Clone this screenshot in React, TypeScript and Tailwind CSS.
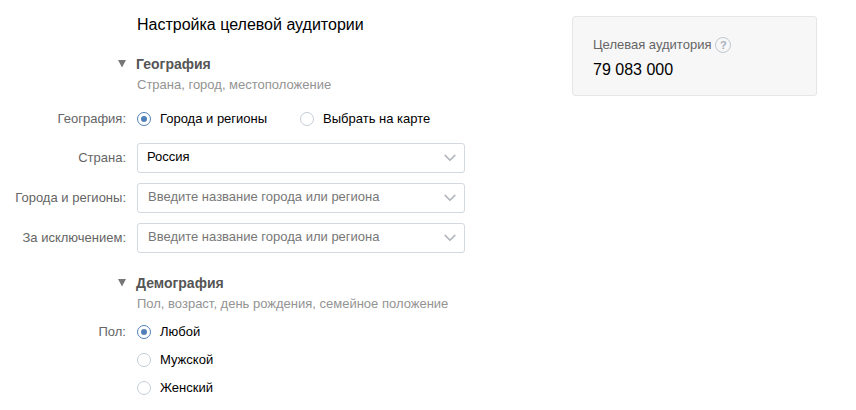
import { useState } from 'react';
import type { ReactNode } from 'react';

type SectionProps = {
  title: string;
  hint: string;
  children: ReactNode;
};

type RowProps = {
  label: string;
  htmlFor: string;
  children: ReactNode;
};

type RadioProps = {
  name: string;
  label: string;
  checked: boolean;
  onSelect: () => void;
};

const GENDERS = ['Любой', 'Мужской', 'Женский'];

function Chevron() {
  return (
    <svg
      className="pointer-events-none absolute top-[11px] right-[9px] h-2 w-3"
      viewBox="0 0 12 8"
      fill="none"
      stroke="#b1b5ba"
      strokeWidth="1.6"
      strokeLinecap="round"
      strokeLinejoin="round"
      aria-hidden="true"
    >
      <path d="M1.2 1.4 6 6.2l4.800-4.800" />
    </svg>
  );
}

function Section({ title, hint, children }: SectionProps) {
  const [open, setOpen] = useState(true);

  return (
    <section>
      <h2>
        <button
          type="button"
          className="flex items-center gap-[10px] pl-[118px] text-[14px] leading-5 font-bold text-[#555]"
          aria-expanded={open}
          onClick={() => setOpen(!open)}
        >
          <svg className="h-2 w-2" viewBox="0 0 8 8" fill="#777" aria-hidden="true">
            <path d="M0 0h8L4 7.5z" />
          </svg>
          {title}
        </button>
      </h2>
      <p className="mt-px pl-[137px] text-[13px] leading-5 text-[#939393]">{hint}</p>
      {open && children}
    </section>
  );
}

function Row({ label, htmlFor, children }: RowProps) {
  return (
    <div className="flex items-center gap-[11px]">
      <label htmlFor={htmlFor} className="w-[126px] shrink-0 text-right text-[#656565]">
        {label}
      </label>
      <div className="relative max-w-[328px] flex-1">{children}</div>
    </div>
  );
}

function Radio({ name, label, checked, onSelect }: RadioProps) {
  return (
    <label className="flex cursor-pointer items-center gap-[9px] leading-5">
      <input
        type="radio"
        name={name}
        checked={checked}
        onChange={onSelect}
        className="h-[14px] w-[14px] appearance-none rounded-full border border-[#c5cdd6] bg-white bg-clip-content p-[3px] checked:border-[#5181b8] checked:bg-[#5181b8]"
      />
      {label}
    </label>
  );
}

export default function App() {
  const [place, setPlace] = useState('regions');
  const [gender, setGender] = useState(GENDERS[0]);

  return (
    <div className="flex min-h-screen items-start bg-white pr-[39px] font-['Liberation_Sans',Arial,sans-serif] text-[13px] text-black">
      <form className="min-w-0 flex-1 pt-[13px]">
        <h1 className="pl-[137px] text-[16px] leading-6">Настройка целевой аудитории</h1>

        <div className="mt-[17px] flex flex-col gap-5">
          <Section title="География" hint="Страна, город, местоположение">
            <div role="radiogroup" aria-labelledby="geo-label" className="mt-[14px] flex gap-[11px]">
              <span id="geo-label" className="w-[126px] text-right leading-5 text-[#656565]">
                География:
              </span>
              <div className="flex gap-[33px]">
                <Radio
                  name="place"
                  label="Города и регионы"
                  checked={place === 'regions'}
                  onSelect={() => setPlace('regions')}
                />
                <Radio
                  name="place"
                  label="Выбрать на карте"
                  checked={place === 'map'}
                  onSelect={() => setPlace('map')}
                />
              </div>
            </div>

            <div className="mt-[14px] flex flex-col gap-[10px]">
              <Row label="Страна:" htmlFor="country">
                <select
                  id="country"
                  className="block h-[30px] w-full appearance-none rounded-[3px] border border-[#d3d9de] bg-white pr-8 pb-[3px] pl-[9px]"
                >
                  <option>Россия</option>
                </select>
                <Chevron />
              </Row>
              <Row label="Города и регионы:" htmlFor="regions">
                <input
                  id="regions"
                  type="text"
                  placeholder="Введите название города или региона"
                  className="block h-[30px] w-full rounded-[3px] border border-[#d3d9de] bg-white pr-8 pb-[3px] pl-[10px] placeholder:text-[#777]"
                />
                <Chevron />
              </Row>
              <Row label="За исключением:" htmlFor="excluded">
                <input
                  id="excluded"
                  type="text"
                  placeholder="Введите название города или региона"
                  className="block h-[30px] w-full rounded-[3px] border border-[#d3d9de] bg-white pr-8 pb-[3px] pl-[10px] placeholder:text-[#777]"
                />
                <Chevron />
              </Row>
            </div>
          </Section>

          <Section title="Демография" hint="Пол, возраст, день рождения, семейное положение">
            <div role="radiogroup" aria-labelledby="gender-label" className="mt-2 flex gap-[11px]">
              <span id="gender-label" className="w-[126px] text-right leading-5 text-[#656565]">
                Пол:
              </span>
              <div className="flex flex-col gap-2">
                {GENDERS.map((item) => (
                  <Radio
                    key={item}
                    name="gender"
                    label={item}
                    checked={gender === item}
                    onSelect={() => setGender(item)}
                  />
                ))}
              </div>
            </div>
          </Section>
        </div>
      </form>

      <aside className="mt-4 w-[245px] shrink-0 rounded-[3px] border border-[#e4e6ea] bg-[#f7f7f7] px-5 pt-[18px] pb-[13px]">
        <div className="flex items-center gap-1 leading-5 text-[#656565]">
          Целевая аудитория
          <button
            type="button"
            aria-label="Справка"
            className="flex h-4 w-4 items-center justify-center rounded-full border border-[#c0c8d2] text-[11px] font-bold text-[#a7b0bc]"
          >
            ?
          </button>
        </div>
        <div className="mt-[3px] text-[16px] leading-6">79 083 000</div>
      </aside>
    </div>
  );
}
